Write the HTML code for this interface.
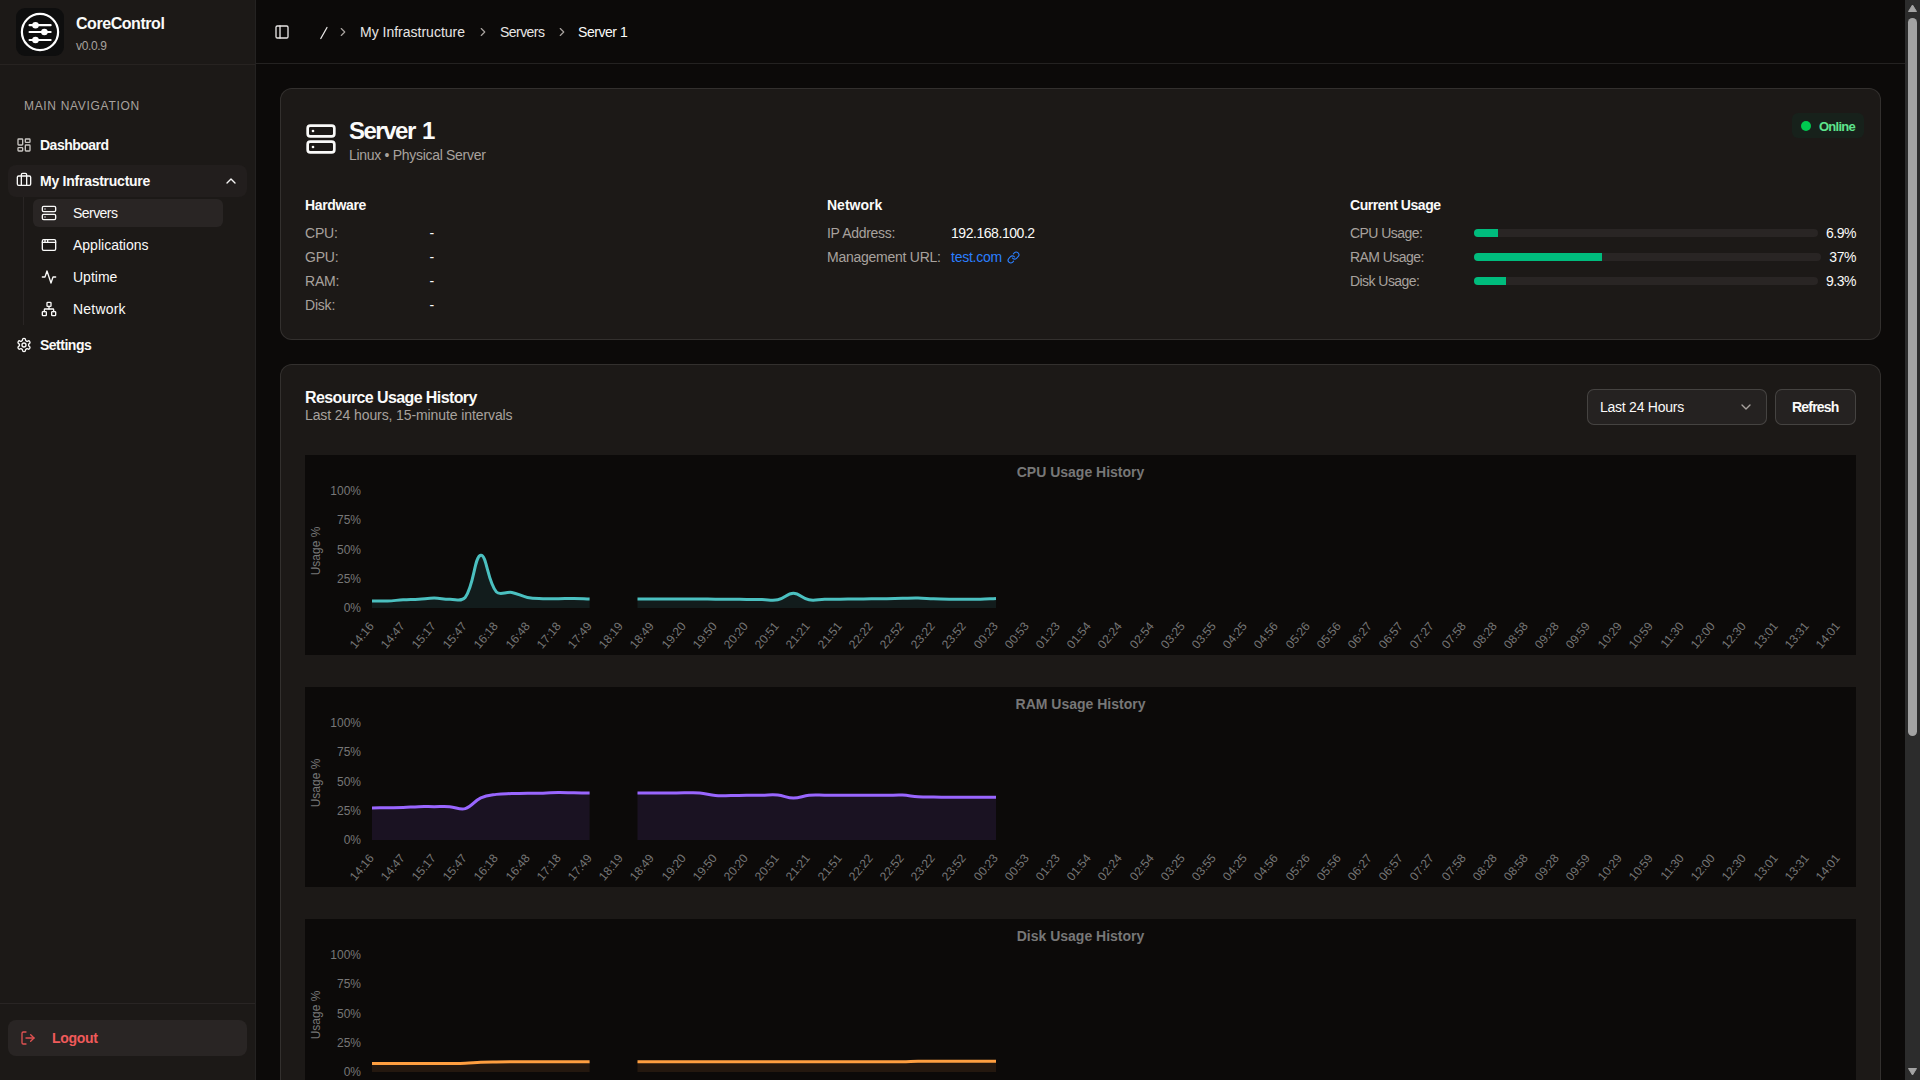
<!DOCTYPE html><html><head><meta charset="utf-8"><title>CoreControl</title><style>
*{margin:0;padding:0;box-sizing:border-box}
html,body{width:1920px;height:1080px;overflow:hidden;background:#0c0a09;font-family:"Liberation Sans",sans-serif}
.t{position:absolute;white-space:pre}
.a{position:absolute}
svg{position:absolute;overflow:visible}
</style></head><body>
<div class="a" style="left:0;top:0;width:256px;height:1080px;background:#1c1917;border-right:1px solid #242221"></div>
<div class="a" style="left:0;top:64px;width:255px;height:1px;background:#272321"></div>
<div class="a" style="left:0;top:1003px;width:255px;height:1px;background:#292524"></div>
<div class="a" style="left:16px;top:8px;width:48px;height:48px;border-radius:9px;background:#0e0e0e"></div>
<svg style="left:16px;top:8px" width="48" height="48" viewBox="0 0 48 48"><circle cx="24" cy="24" r="18.1" fill="none" stroke="#fff" stroke-width="2.2"/><g stroke="#fff" stroke-width="2.2" stroke-linecap="round"><line x1="13.6" y1="17.2" x2="34.6" y2="17.2"/><line x1="13.6" y1="24" x2="34.6" y2="24"/><line x1="13.6" y1="32" x2="34.6" y2="32"/></g><g fill="#fff"><circle cx="19.5" cy="17.2" r="3.3"/><circle cx="28.4" cy="24" r="3.3"/><circle cx="19.5" cy="32" r="3.3"/></g></svg>
<div class="t" style="left:76px;top:16.00px;font-size:16px;line-height:16px;font-weight:700;color:#fafaf9;letter-spacing:-0.45px;">CoreControl</div>
<div class="t" style="left:76px;top:39.80px;font-size:12px;line-height:12px;font-weight:400;color:#a8a29e;letter-spacing:-0.35px;">v0.0.9</div>
<div class="t" style="left:24px;top:99.80px;font-size:12px;line-height:12px;font-weight:400;color:#a8a29e;letter-spacing:0.68px;">MAIN NAVIGATION</div>
<svg style="left:16px;top:137px" width="16" height="16" viewBox="0 0 24 24" fill="none" stroke="#c8c5c2" stroke-width="2" stroke-linecap="round" stroke-linejoin="round"><rect width="7" height="9" x="3" y="3" rx="1"/><rect width="7" height="5" x="14" y="3" rx="1"/><rect width="7" height="9" x="14" y="12" rx="1"/><rect width="7" height="5" x="3" y="16" rx="1"/></svg>
<div class="t" style="left:40px;top:138.10px;font-size:14px;line-height:14px;font-weight:700;color:#fafaf9;letter-spacing:-0.5px;">Dashboard</div>
<div class="a" style="left:8px;top:165px;width:239px;height:32px;border-radius:8px;background:#221e1d"></div>
<svg style="left:16px;top:172px" width="16" height="16" viewBox="0 0 24 24" fill="none" stroke="#fafaf9" stroke-width="2" stroke-linecap="round" stroke-linejoin="round"><path d="M16 20V4a2 2 0 0 0-2-2h-4a2 2 0 0 0-2 2v16"/><rect width="20" height="14" x="2" y="6" rx="2"/></svg>
<div class="t" style="left:40px;top:174.10px;font-size:14px;line-height:14px;font-weight:700;color:#fafaf9;letter-spacing:-0.25px;">My Infrastructure</div>
<svg style="left:223px;top:173px" width="16" height="16" viewBox="0 0 24 24" fill="none" stroke="#f5f5f4" stroke-width="2" stroke-linecap="round" stroke-linejoin="round"><path d="m18 15-6-6-6 6"/></svg>
<div class="a" style="left:23px;top:197px;width:1px;height:128px;background:#292524"></div>
<div class="a" style="left:33px;top:199px;width:190px;height:28px;border-radius:6px;background:#292524"></div>
<svg style="left:41px;top:205px" width="16" height="16" viewBox="0 0 24 24" fill="none" stroke="#fafaf9" stroke-width="2" stroke-linecap="round" stroke-linejoin="round"><rect width="20" height="8" x="2" y="2" rx="2" ry="2"/><rect width="20" height="8" x="2" y="14" rx="2" ry="2"/><line x1="6" x2="6.01" y1="6" y2="6"/><line x1="6" x2="6.01" y1="18" y2="18"/></svg>
<div class="t" style="left:73px;top:205.60px;font-size:14px;line-height:14px;font-weight:400;color:#fafaf9;letter-spacing:-0.55px;">Servers</div>
<svg style="left:41px;top:237px" width="16" height="16" viewBox="0 0 24 24" fill="none" stroke="#fafaf9" stroke-width="2" stroke-linecap="round" stroke-linejoin="round"><rect width="20" height="16" x="2" y="4" rx="2"/><path d="M10 4v4"/><path d="M2 8h20"/><path d="M6 4v4"/></svg>
<div class="t" style="left:73px;top:238.10px;font-size:14px;line-height:14px;font-weight:400;color:#fafaf9;">Applications</div>
<svg style="left:41px;top:269px" width="16" height="16" viewBox="0 0 24 24" fill="none" stroke="#fafaf9" stroke-width="2" stroke-linecap="round" stroke-linejoin="round"><path d="M22 12h-4l-3 9L9 3l-3 9H2"/></svg>
<div class="t" style="left:73px;top:270.10px;font-size:14px;line-height:14px;font-weight:400;color:#fafaf9;">Uptime</div>
<svg style="left:41px;top:301px" width="16" height="16" viewBox="0 0 24 24" fill="none" stroke="#fafaf9" stroke-width="2" stroke-linecap="round" stroke-linejoin="round"><rect x="16" y="16" width="6" height="6" rx="1"/><rect x="2" y="16" width="6" height="6" rx="1"/><rect x="9" y="2" width="6" height="6" rx="1"/><path d="M5 16v-3a1 1 0 0 1 1-1h12a1 1 0 0 1 1 1v3"/><path d="M12 12V8"/></svg>
<div class="t" style="left:73px;top:302.10px;font-size:14px;line-height:14px;font-weight:400;color:#fafaf9;letter-spacing:0.2px;">Network</div>
<svg style="left:16px;top:337px" width="16" height="16" viewBox="0 0 24 24" fill="none" stroke="#fafaf9" stroke-width="2" stroke-linecap="round" stroke-linejoin="round"><path d="M12.22 2h-.44a2 2 0 0 0-2 2v.18a2 2 0 0 1-1 1.73l-.43.25a2 2 0 0 1-2 0l-.15-.08a2 2 0 0 0-2.73.73l-.22.38a2 2 0 0 0 .73 2.73l.15.1a2 2 0 0 1 1 1.72v.51a2 2 0 0 1-1 1.74l-.15.09a2 2 0 0 0-.73 2.73l.22.38a2 2 0 0 0 2.73.73l.15-.08a2 2 0 0 1 2 0l.43.25a2 2 0 0 1 1 1.73V20a2 2 0 0 0 2 2h.44a2 2 0 0 0 2-2v-.18a2 2 0 0 1 1-1.73l.43-.25a2 2 0 0 1 2 0l.15.08a2 2 0 0 0 2.73-.73l.22-.39a2 2 0 0 0-.73-2.73l-.15-.08a2 2 0 0 1-1-1.74v-.5a2 2 0 0 1 1-1.74l.15-.09a2 2 0 0 0 .73-2.73l-.22-.38a2 2 0 0 0-2.73-.73l-.15.08a2 2 0 0 1-2 0l-.43-.25a2 2 0 0 1-1-1.73V4a2 2 0 0 0-2-2z"/><circle cx="12" cy="12" r="3"/></svg>
<div class="t" style="left:40px;top:338.10px;font-size:14px;line-height:14px;font-weight:700;color:#fafaf9;letter-spacing:-0.5px;">Settings</div>
<div class="a" style="left:8px;top:1020px;width:239px;height:36px;border-radius:8px;background:#292524"></div>
<svg style="left:20px;top:1030px" width="16" height="16" viewBox="0 0 24 24" fill="none" stroke="#e05252" stroke-width="2" stroke-linecap="round" stroke-linejoin="round"><path d="M9 21H5a2 2 0 0 1-2-2V5a2 2 0 0 1 2-2h4"/><polyline points="16 17 21 12 16 7"/><line x1="21" x2="9" y1="12" y2="12"/></svg>
<div class="t" style="left:52px;top:1031.10px;font-size:14px;line-height:14px;font-weight:700;color:#f05a5a;letter-spacing:-0.3px;">Logout</div>
<div class="a" style="left:256px;top:63px;width:1649px;height:1px;background:#242221"></div>
<svg style="left:274px;top:24px" width="16" height="16" viewBox="0 0 24 24" fill="none" stroke="#e7e5e4" stroke-width="2" stroke-linecap="round" stroke-linejoin="round"><rect width="18" height="18" x="3" y="3" rx="2"/><path d="M9 3v18"/></svg>
<svg style="left:318px;top:25px" width="12" height="16"><line x1="9" y1="2.5" x2="2.8" y2="13.5" stroke="#e7e5e4" stroke-width="1.3" stroke-linecap="round"/></svg>
<svg style="left:336px;top:25px" width="14" height="14" viewBox="0 0 24 24" fill="none" stroke="#a8a29e" stroke-width="2" stroke-linecap="round" stroke-linejoin="round"><path d="m9 18 6-6-6-6"/></svg>
<div class="t" style="left:360px;top:25.10px;font-size:14px;line-height:14px;font-weight:400;color:#e7e5e4;">My Infrastructure</div>
<svg style="left:476px;top:25px" width="14" height="14" viewBox="0 0 24 24" fill="none" stroke="#a8a29e" stroke-width="2" stroke-linecap="round" stroke-linejoin="round"><path d="m9 18 6-6-6-6"/></svg>
<div class="t" style="left:500px;top:25.10px;font-size:14px;line-height:14px;font-weight:400;color:#e7e5e4;letter-spacing:-0.55px;">Servers</div>
<svg style="left:555px;top:25px" width="14" height="14" viewBox="0 0 24 24" fill="none" stroke="#a8a29e" stroke-width="2" stroke-linecap="round" stroke-linejoin="round"><path d="m9 18 6-6-6-6"/></svg>
<div class="t" style="left:578px;top:25.10px;font-size:14px;line-height:14px;font-weight:400;color:#fafaf9;letter-spacing:-0.45px;">Server 1</div>
<div class="a" style="left:280px;top:88px;width:1601px;height:252px;border-radius:12px;background:#1c1917;border:1px solid rgba(255,255,255,0.1)"></div>
<svg style="left:305px;top:123px" width="32" height="32" viewBox="0 0 24 24" fill="none" stroke="#fafaf9" stroke-width="2" stroke-linecap="round" stroke-linejoin="round"><rect width="20" height="8" x="2" y="2" rx="2" ry="2"/><rect width="20" height="8" x="2" y="14" rx="2" ry="2"/><line x1="6" x2="6.01" y1="6" y2="6"/><line x1="6" x2="6.01" y1="18" y2="18"/></svg>
<div class="t" style="left:349px;top:119.10px;font-size:24px;line-height:24px;font-weight:700;color:#fafaf9;letter-spacing:-1.5px;word-spacing:2px;">Server 1</div>
<div class="t" style="left:349px;top:148.10px;font-size:14px;line-height:14px;font-weight:400;color:#a8a29e;letter-spacing:-0.3px;">Linux • Physical Server</div>
<div class="a" style="left:1792px;top:113px;width:72px;height:25px;border-radius:6px;background:#17211b"></div>
<div class="a" style="left:1801px;top:120.8px;width:10px;height:10px;border-radius:50%;background:#00c950"></div>
<div class="t" style="left:1819px;top:120.45px;font-size:13px;line-height:13px;font-weight:700;color:#5ee48c;letter-spacing:-0.75px;">Online</div>
<div class="t" style="left:305px;top:197.80px;font-size:14px;line-height:14px;font-weight:700;color:#fafaf9;letter-spacing:-0.35px;">Hardware</div>
<div class="t" style="left:305px;top:226.40px;font-size:14px;line-height:14px;font-weight:400;color:#a8a29e;letter-spacing:-0.2px;">CPU:</div>
<div class="t" style="left:429.5px;top:226.40px;font-size:14px;line-height:14px;font-weight:400;color:#fafaf9;">-</div>
<div class="t" style="left:305px;top:250.40px;font-size:14px;line-height:14px;font-weight:400;color:#a8a29e;letter-spacing:-0.2px;">GPU:</div>
<div class="t" style="left:429.5px;top:250.40px;font-size:14px;line-height:14px;font-weight:400;color:#fafaf9;">-</div>
<div class="t" style="left:305px;top:274.40px;font-size:14px;line-height:14px;font-weight:400;color:#a8a29e;letter-spacing:-0.2px;">RAM:</div>
<div class="t" style="left:429.5px;top:274.40px;font-size:14px;line-height:14px;font-weight:400;color:#fafaf9;">-</div>
<div class="t" style="left:305px;top:298.40px;font-size:14px;line-height:14px;font-weight:400;color:#a8a29e;letter-spacing:-0.2px;">Disk:</div>
<div class="t" style="left:429.5px;top:298.40px;font-size:14px;line-height:14px;font-weight:400;color:#fafaf9;">-</div>
<div class="t" style="left:827px;top:197.90px;font-size:14px;line-height:14px;font-weight:700;color:#fafaf9;">Network</div>
<div class="t" style="left:827px;top:226.00px;font-size:14px;line-height:14px;font-weight:400;color:#a8a29e;letter-spacing:-0.3px;">IP Address:</div>
<div class="t" style="left:951px;top:226.00px;font-size:14px;line-height:14px;font-weight:400;color:#fafaf9;letter-spacing:-0.45px;">192.168.100.2</div>
<div class="t" style="left:827px;top:250.00px;font-size:14px;line-height:14px;font-weight:400;color:#a8a29e;letter-spacing:-0.25px;">Management URL:</div>
<div class="t" style="left:951px;top:249.70px;font-size:14px;line-height:14px;font-weight:400;color:#2b7fff;letter-spacing:-0.25px;">test.com</div>
<svg style="left:1007px;top:251px" width="13" height="13" viewBox="0 0 24 24" fill="none" stroke="#2b7fff" stroke-width="2" stroke-linecap="round" stroke-linejoin="round"><path d="M10 13a5 5 0 0 0 7.54.54l3-3a5 5 0 0 0-7.07-7.07l-1.72 1.71"/><path d="M14 11a5 5 0 0 0-7.54-.54l-3 3a5 5 0 0 0 7.07 7.07l1.71-1.71"/></svg>
<div class="t" style="left:1350px;top:198.30px;font-size:14px;line-height:14px;font-weight:700;color:#fafaf9;letter-spacing:-0.45px;">Current Usage</div>
<div class="t" style="left:1350px;top:226.00px;font-size:14px;line-height:14px;font-weight:400;color:#a8a29e;letter-spacing:-0.55px;">CPU Usage:</div>
<div class="a" style="left:1474px;top:229px;width:343.5px;height:8px;border-radius:4px;background:#292524;overflow:hidden"><div style="width:6.9%;height:8px;background:#00bc7d"></div></div>
<div class="t" style="right:64px;top:226.00px;font-size:14px;line-height:14px;color:#fafaf9;letter-spacing:-0.45px">6.9%</div>
<div class="t" style="left:1350px;top:250.00px;font-size:14px;line-height:14px;font-weight:400;color:#a8a29e;letter-spacing:-0.55px;">RAM Usage:</div>
<div class="a" style="left:1474px;top:253px;width:346.70000000000005px;height:8px;border-radius:4px;background:#292524;overflow:hidden"><div style="width:37%;height:8px;background:#00bc7d"></div></div>
<div class="t" style="right:64px;top:250.00px;font-size:14px;line-height:14px;color:#fafaf9;letter-spacing:-0.45px">37%</div>
<div class="t" style="left:1350px;top:274.00px;font-size:14px;line-height:14px;font-weight:400;color:#a8a29e;letter-spacing:-0.55px;">Disk Usage:</div>
<div class="a" style="left:1474px;top:277px;width:343.5px;height:8px;border-radius:4px;background:#292524;overflow:hidden"><div style="width:9.3%;height:8px;background:#00bc7d"></div></div>
<div class="t" style="right:64px;top:274.00px;font-size:14px;line-height:14px;color:#fafaf9;letter-spacing:-0.45px">9.3%</div>
<div class="a" style="left:280px;top:364px;width:1601px;height:900px;border-radius:12px;background:#1c1917;border:1px solid rgba(255,255,255,0.1)"></div>
<div class="t" style="left:305px;top:390.00px;font-size:16px;line-height:16px;font-weight:700;color:#fafaf9;letter-spacing:-0.6px;">Resource Usage History</div>
<div class="t" style="left:305px;top:407.90px;font-size:14px;line-height:14px;font-weight:400;color:#a8a29e;letter-spacing:-0.1px;">Last 24 hours, 15-minute intervals</div>
<div class="a" style="left:1587px;top:389px;width:180px;height:36px;border-radius:7px;background:rgba(255,255,255,0.045);border:1px solid rgba(255,255,255,0.15)"></div>
<div class="t" style="left:1600px;top:400.30px;font-size:14px;line-height:14px;font-weight:400;color:#fafaf9;letter-spacing:-0.25px;">Last 24 Hours</div>
<svg style="left:1738px;top:399px" width="16" height="16" viewBox="0 0 24 24" fill="none" stroke="#a8a29e" stroke-width="2" stroke-linecap="round" stroke-linejoin="round"><path d="m6 9 6 6 6-6"/></svg>
<div class="a" style="left:1775px;top:389px;width:81px;height:36px;border-radius:7px;background:rgba(255,255,255,0.045);border:1px solid rgba(255,255,255,0.15)"></div>
<div class="t" style="left:1792px;top:400.30px;font-size:14px;line-height:14px;font-weight:700;color:#fafaf9;letter-spacing:-0.8px;">Refresh</div>
<div class="a" style="left:305px;top:455px;width:1551px;height:200px;background:#0c0a09"></div>
<div class="t" style="left:305px;width:1551px;text-align:center;top:465.10px;font-size:14px;line-height:14px;font-weight:700;color:#777">CPU Usage History</div>
<div class="t" style="right:1559px;top:485.10px;font-size:12px;line-height:12px;color:#777">100%</div>
<div class="t" style="right:1559px;top:514.35px;font-size:12px;line-height:12px;color:#777">75%</div>
<div class="t" style="right:1559px;top:543.60px;font-size:12px;line-height:12px;color:#777">50%</div>
<div class="t" style="right:1559px;top:572.85px;font-size:12px;line-height:12px;color:#777">25%</div>
<div class="t" style="right:1559px;top:602.10px;font-size:12px;line-height:12px;color:#777">0%</div>
<div class="t" style="left:316px;top:551px;font-size:12px;line-height:12px;color:#777;transform:translate(-50%,-50%) rotate(-90deg);transform-origin:center">Usage %</div>
<div class="t" style="left:266.60px;width:100px;text-align:right;top:620px;font-size:12px;line-height:12px;color:#777;transform-origin:100% 0;transform:rotate(-50deg)">14:16</div>
<div class="t" style="left:297.80px;width:100px;text-align:right;top:620px;font-size:12px;line-height:12px;color:#777;transform-origin:100% 0;transform:rotate(-50deg)">14:47</div>
<div class="t" style="left:329.00px;width:100px;text-align:right;top:620px;font-size:12px;line-height:12px;color:#777;transform-origin:100% 0;transform:rotate(-50deg)">15:17</div>
<div class="t" style="left:360.20px;width:100px;text-align:right;top:620px;font-size:12px;line-height:12px;color:#777;transform-origin:100% 0;transform:rotate(-50deg)">15:47</div>
<div class="t" style="left:391.40px;width:100px;text-align:right;top:620px;font-size:12px;line-height:12px;color:#777;transform-origin:100% 0;transform:rotate(-50deg)">16:18</div>
<div class="t" style="left:422.60px;width:100px;text-align:right;top:620px;font-size:12px;line-height:12px;color:#777;transform-origin:100% 0;transform:rotate(-50deg)">16:48</div>
<div class="t" style="left:453.80px;width:100px;text-align:right;top:620px;font-size:12px;line-height:12px;color:#777;transform-origin:100% 0;transform:rotate(-50deg)">17:18</div>
<div class="t" style="left:485.00px;width:100px;text-align:right;top:620px;font-size:12px;line-height:12px;color:#777;transform-origin:100% 0;transform:rotate(-50deg)">17:49</div>
<div class="t" style="left:516.20px;width:100px;text-align:right;top:620px;font-size:12px;line-height:12px;color:#777;transform-origin:100% 0;transform:rotate(-50deg)">18:19</div>
<div class="t" style="left:547.40px;width:100px;text-align:right;top:620px;font-size:12px;line-height:12px;color:#777;transform-origin:100% 0;transform:rotate(-50deg)">18:49</div>
<div class="t" style="left:578.60px;width:100px;text-align:right;top:620px;font-size:12px;line-height:12px;color:#777;transform-origin:100% 0;transform:rotate(-50deg)">19:20</div>
<div class="t" style="left:609.80px;width:100px;text-align:right;top:620px;font-size:12px;line-height:12px;color:#777;transform-origin:100% 0;transform:rotate(-50deg)">19:50</div>
<div class="t" style="left:641.00px;width:100px;text-align:right;top:620px;font-size:12px;line-height:12px;color:#777;transform-origin:100% 0;transform:rotate(-50deg)">20:20</div>
<div class="t" style="left:672.20px;width:100px;text-align:right;top:620px;font-size:12px;line-height:12px;color:#777;transform-origin:100% 0;transform:rotate(-50deg)">20:51</div>
<div class="t" style="left:703.40px;width:100px;text-align:right;top:620px;font-size:12px;line-height:12px;color:#777;transform-origin:100% 0;transform:rotate(-50deg)">21:21</div>
<div class="t" style="left:734.60px;width:100px;text-align:right;top:620px;font-size:12px;line-height:12px;color:#777;transform-origin:100% 0;transform:rotate(-50deg)">21:51</div>
<div class="t" style="left:765.80px;width:100px;text-align:right;top:620px;font-size:12px;line-height:12px;color:#777;transform-origin:100% 0;transform:rotate(-50deg)">22:22</div>
<div class="t" style="left:797.00px;width:100px;text-align:right;top:620px;font-size:12px;line-height:12px;color:#777;transform-origin:100% 0;transform:rotate(-50deg)">22:52</div>
<div class="t" style="left:828.20px;width:100px;text-align:right;top:620px;font-size:12px;line-height:12px;color:#777;transform-origin:100% 0;transform:rotate(-50deg)">23:22</div>
<div class="t" style="left:859.40px;width:100px;text-align:right;top:620px;font-size:12px;line-height:12px;color:#777;transform-origin:100% 0;transform:rotate(-50deg)">23:52</div>
<div class="t" style="left:890.60px;width:100px;text-align:right;top:620px;font-size:12px;line-height:12px;color:#777;transform-origin:100% 0;transform:rotate(-50deg)">00:23</div>
<div class="t" style="left:921.80px;width:100px;text-align:right;top:620px;font-size:12px;line-height:12px;color:#777;transform-origin:100% 0;transform:rotate(-50deg)">00:53</div>
<div class="t" style="left:953.00px;width:100px;text-align:right;top:620px;font-size:12px;line-height:12px;color:#777;transform-origin:100% 0;transform:rotate(-50deg)">01:23</div>
<div class="t" style="left:984.20px;width:100px;text-align:right;top:620px;font-size:12px;line-height:12px;color:#777;transform-origin:100% 0;transform:rotate(-50deg)">01:54</div>
<div class="t" style="left:1015.40px;width:100px;text-align:right;top:620px;font-size:12px;line-height:12px;color:#777;transform-origin:100% 0;transform:rotate(-50deg)">02:24</div>
<div class="t" style="left:1046.60px;width:100px;text-align:right;top:620px;font-size:12px;line-height:12px;color:#777;transform-origin:100% 0;transform:rotate(-50deg)">02:54</div>
<div class="t" style="left:1077.80px;width:100px;text-align:right;top:620px;font-size:12px;line-height:12px;color:#777;transform-origin:100% 0;transform:rotate(-50deg)">03:25</div>
<div class="t" style="left:1109.00px;width:100px;text-align:right;top:620px;font-size:12px;line-height:12px;color:#777;transform-origin:100% 0;transform:rotate(-50deg)">03:55</div>
<div class="t" style="left:1140.20px;width:100px;text-align:right;top:620px;font-size:12px;line-height:12px;color:#777;transform-origin:100% 0;transform:rotate(-50deg)">04:25</div>
<div class="t" style="left:1171.40px;width:100px;text-align:right;top:620px;font-size:12px;line-height:12px;color:#777;transform-origin:100% 0;transform:rotate(-50deg)">04:56</div>
<div class="t" style="left:1202.60px;width:100px;text-align:right;top:620px;font-size:12px;line-height:12px;color:#777;transform-origin:100% 0;transform:rotate(-50deg)">05:26</div>
<div class="t" style="left:1233.80px;width:100px;text-align:right;top:620px;font-size:12px;line-height:12px;color:#777;transform-origin:100% 0;transform:rotate(-50deg)">05:56</div>
<div class="t" style="left:1265.00px;width:100px;text-align:right;top:620px;font-size:12px;line-height:12px;color:#777;transform-origin:100% 0;transform:rotate(-50deg)">06:27</div>
<div class="t" style="left:1296.20px;width:100px;text-align:right;top:620px;font-size:12px;line-height:12px;color:#777;transform-origin:100% 0;transform:rotate(-50deg)">06:57</div>
<div class="t" style="left:1327.40px;width:100px;text-align:right;top:620px;font-size:12px;line-height:12px;color:#777;transform-origin:100% 0;transform:rotate(-50deg)">07:27</div>
<div class="t" style="left:1358.60px;width:100px;text-align:right;top:620px;font-size:12px;line-height:12px;color:#777;transform-origin:100% 0;transform:rotate(-50deg)">07:58</div>
<div class="t" style="left:1389.80px;width:100px;text-align:right;top:620px;font-size:12px;line-height:12px;color:#777;transform-origin:100% 0;transform:rotate(-50deg)">08:28</div>
<div class="t" style="left:1421.00px;width:100px;text-align:right;top:620px;font-size:12px;line-height:12px;color:#777;transform-origin:100% 0;transform:rotate(-50deg)">08:58</div>
<div class="t" style="left:1452.20px;width:100px;text-align:right;top:620px;font-size:12px;line-height:12px;color:#777;transform-origin:100% 0;transform:rotate(-50deg)">09:28</div>
<div class="t" style="left:1483.40px;width:100px;text-align:right;top:620px;font-size:12px;line-height:12px;color:#777;transform-origin:100% 0;transform:rotate(-50deg)">09:59</div>
<div class="t" style="left:1514.60px;width:100px;text-align:right;top:620px;font-size:12px;line-height:12px;color:#777;transform-origin:100% 0;transform:rotate(-50deg)">10:29</div>
<div class="t" style="left:1545.80px;width:100px;text-align:right;top:620px;font-size:12px;line-height:12px;color:#777;transform-origin:100% 0;transform:rotate(-50deg)">10:59</div>
<div class="t" style="left:1577.00px;width:100px;text-align:right;top:620px;font-size:12px;line-height:12px;color:#777;transform-origin:100% 0;transform:rotate(-50deg)">11:30</div>
<div class="t" style="left:1608.20px;width:100px;text-align:right;top:620px;font-size:12px;line-height:12px;color:#777;transform-origin:100% 0;transform:rotate(-50deg)">12:00</div>
<div class="t" style="left:1639.40px;width:100px;text-align:right;top:620px;font-size:12px;line-height:12px;color:#777;transform-origin:100% 0;transform:rotate(-50deg)">12:30</div>
<div class="t" style="left:1670.60px;width:100px;text-align:right;top:620px;font-size:12px;line-height:12px;color:#777;transform-origin:100% 0;transform:rotate(-50deg)">13:01</div>
<div class="t" style="left:1701.80px;width:100px;text-align:right;top:620px;font-size:12px;line-height:12px;color:#777;transform-origin:100% 0;transform:rotate(-50deg)">13:31</div>
<div class="t" style="left:1733.00px;width:100px;text-align:right;top:620px;font-size:12px;line-height:12px;color:#777;transform-origin:100% 0;transform:rotate(-50deg)">14:01</div>
<svg style="left:0;top:0" width="1920" height="1080"><path d="M372.00,600.98 C378.22,600.98 381.33,601.21 387.54,600.98 C393.77,600.75 396.86,600.16 403.09,599.81 C409.30,599.46 412.42,599.58 418.63,599.23 C424.85,598.87 427.95,598.05 434.17,598.05 C440.39,598.05 443.51,599.34 449.71,599.23 C455.94,599.11 462.04,602.00 465.26,597.47 C474.48,584.45 474.20,556.54 480.80,555.35 C486.63,554.30 487.41,581.20 496.34,591.85 C499.84,596.03 505.82,591.34 511.89,592.44 C518.26,593.59 521.07,596.20 527.43,597.47 C533.50,598.68 536.75,598.41 542.97,598.64 C549.18,598.87 552.30,598.69 558.51,598.64 C564.73,598.59 567.84,598.34 574.06,598.41 C580.28,598.48 583.38,598.76 589.60,598.99 L589.6,608.0 L372.0,608.0 Z" fill="rgba(75,192,192,0.1)"/><path d="M372.00,600.98 C378.22,600.98 381.33,601.21 387.54,600.98 C393.77,600.75 396.86,600.16 403.09,599.81 C409.30,599.46 412.42,599.58 418.63,599.23 C424.85,598.87 427.95,598.05 434.17,598.05 C440.39,598.05 443.51,599.34 449.71,599.23 C455.94,599.11 462.04,602.00 465.26,597.47 C474.48,584.45 474.20,556.54 480.80,555.35 C486.63,554.30 487.41,581.20 496.34,591.85 C499.84,596.03 505.82,591.34 511.89,592.44 C518.26,593.59 521.07,596.20 527.43,597.47 C533.50,598.68 536.75,598.41 542.97,598.64 C549.18,598.87 552.30,598.69 558.51,598.64 C564.73,598.59 567.84,598.34 574.06,598.41 C580.28,598.48 583.38,598.76 589.60,598.99" fill="none" stroke="#4bc0c0" stroke-width="3"/><path d="M637.50,598.99 C643.73,598.99 646.85,598.99 653.09,598.99 C659.32,598.99 662.44,598.99 668.67,598.99 C674.91,598.99 678.03,598.99 684.26,598.99 C690.50,598.99 693.61,598.94 699.85,598.99 C706.08,599.04 709.20,599.18 715.43,599.23 C721.67,599.27 724.79,599.18 731.02,599.23 C737.26,599.27 740.37,599.39 746.61,599.46 C752.84,599.53 755.96,599.51 762.20,599.58 C768.43,599.65 771.80,601.02 777.78,599.81 C784.27,598.50 787.13,593.26 793.37,593.26 C799.60,593.26 802.47,598.57 808.96,599.81 C814.94,600.96 818.31,599.34 824.54,599.23 C830.78,599.11 833.90,599.27 840.13,599.23 C846.37,599.18 849.48,599.06 855.72,598.99 C861.95,598.92 865.07,598.94 871.30,598.87 C877.54,598.80 880.66,598.76 886.89,598.64 C893.13,598.52 896.24,598.41 902.48,598.29 C908.71,598.17 911.83,597.94 918.07,598.05 C924.30,598.17 927.41,598.64 933.65,598.87 C939.88,599.11 943.00,599.15 949.24,599.23 C955.47,599.30 958.59,599.23 964.83,599.23 C971.06,599.23 974.18,599.39 980.41,599.23 C986.65,599.06 989.77,598.73 996.00,598.41 L996.0,608.0 L637.5,608.0 Z" fill="rgba(75,192,192,0.1)"/><path d="M637.50,598.99 C643.73,598.99 646.85,598.99 653.09,598.99 C659.32,598.99 662.44,598.99 668.67,598.99 C674.91,598.99 678.03,598.99 684.26,598.99 C690.50,598.99 693.61,598.94 699.85,598.99 C706.08,599.04 709.20,599.18 715.43,599.23 C721.67,599.27 724.79,599.18 731.02,599.23 C737.26,599.27 740.37,599.39 746.61,599.46 C752.84,599.53 755.96,599.51 762.20,599.58 C768.43,599.65 771.80,601.02 777.78,599.81 C784.27,598.50 787.13,593.26 793.37,593.26 C799.60,593.26 802.47,598.57 808.96,599.81 C814.94,600.96 818.31,599.34 824.54,599.23 C830.78,599.11 833.90,599.27 840.13,599.23 C846.37,599.18 849.48,599.06 855.72,598.99 C861.95,598.92 865.07,598.94 871.30,598.87 C877.54,598.80 880.66,598.76 886.89,598.64 C893.13,598.52 896.24,598.41 902.48,598.29 C908.71,598.17 911.83,597.94 918.07,598.05 C924.30,598.17 927.41,598.64 933.65,598.87 C939.88,599.11 943.00,599.15 949.24,599.23 C955.47,599.30 958.59,599.23 964.83,599.23 C971.06,599.23 974.18,599.39 980.41,599.23 C986.65,599.06 989.77,598.73 996.00,598.41" fill="none" stroke="#4bc0c0" stroke-width="3"/></svg>
<div class="a" style="left:305px;top:687px;width:1551px;height:200px;background:#0c0a09"></div>
<div class="t" style="left:305px;width:1551px;text-align:center;top:697.10px;font-size:14px;line-height:14px;font-weight:700;color:#777">RAM Usage History</div>
<div class="t" style="right:1559px;top:717.10px;font-size:12px;line-height:12px;color:#777">100%</div>
<div class="t" style="right:1559px;top:746.35px;font-size:12px;line-height:12px;color:#777">75%</div>
<div class="t" style="right:1559px;top:775.60px;font-size:12px;line-height:12px;color:#777">50%</div>
<div class="t" style="right:1559px;top:804.85px;font-size:12px;line-height:12px;color:#777">25%</div>
<div class="t" style="right:1559px;top:834.10px;font-size:12px;line-height:12px;color:#777">0%</div>
<div class="t" style="left:316px;top:783px;font-size:12px;line-height:12px;color:#777;transform:translate(-50%,-50%) rotate(-90deg);transform-origin:center">Usage %</div>
<div class="t" style="left:266.60px;width:100px;text-align:right;top:852px;font-size:12px;line-height:12px;color:#777;transform-origin:100% 0;transform:rotate(-50deg)">14:16</div>
<div class="t" style="left:297.80px;width:100px;text-align:right;top:852px;font-size:12px;line-height:12px;color:#777;transform-origin:100% 0;transform:rotate(-50deg)">14:47</div>
<div class="t" style="left:329.00px;width:100px;text-align:right;top:852px;font-size:12px;line-height:12px;color:#777;transform-origin:100% 0;transform:rotate(-50deg)">15:17</div>
<div class="t" style="left:360.20px;width:100px;text-align:right;top:852px;font-size:12px;line-height:12px;color:#777;transform-origin:100% 0;transform:rotate(-50deg)">15:47</div>
<div class="t" style="left:391.40px;width:100px;text-align:right;top:852px;font-size:12px;line-height:12px;color:#777;transform-origin:100% 0;transform:rotate(-50deg)">16:18</div>
<div class="t" style="left:422.60px;width:100px;text-align:right;top:852px;font-size:12px;line-height:12px;color:#777;transform-origin:100% 0;transform:rotate(-50deg)">16:48</div>
<div class="t" style="left:453.80px;width:100px;text-align:right;top:852px;font-size:12px;line-height:12px;color:#777;transform-origin:100% 0;transform:rotate(-50deg)">17:18</div>
<div class="t" style="left:485.00px;width:100px;text-align:right;top:852px;font-size:12px;line-height:12px;color:#777;transform-origin:100% 0;transform:rotate(-50deg)">17:49</div>
<div class="t" style="left:516.20px;width:100px;text-align:right;top:852px;font-size:12px;line-height:12px;color:#777;transform-origin:100% 0;transform:rotate(-50deg)">18:19</div>
<div class="t" style="left:547.40px;width:100px;text-align:right;top:852px;font-size:12px;line-height:12px;color:#777;transform-origin:100% 0;transform:rotate(-50deg)">18:49</div>
<div class="t" style="left:578.60px;width:100px;text-align:right;top:852px;font-size:12px;line-height:12px;color:#777;transform-origin:100% 0;transform:rotate(-50deg)">19:20</div>
<div class="t" style="left:609.80px;width:100px;text-align:right;top:852px;font-size:12px;line-height:12px;color:#777;transform-origin:100% 0;transform:rotate(-50deg)">19:50</div>
<div class="t" style="left:641.00px;width:100px;text-align:right;top:852px;font-size:12px;line-height:12px;color:#777;transform-origin:100% 0;transform:rotate(-50deg)">20:20</div>
<div class="t" style="left:672.20px;width:100px;text-align:right;top:852px;font-size:12px;line-height:12px;color:#777;transform-origin:100% 0;transform:rotate(-50deg)">20:51</div>
<div class="t" style="left:703.40px;width:100px;text-align:right;top:852px;font-size:12px;line-height:12px;color:#777;transform-origin:100% 0;transform:rotate(-50deg)">21:21</div>
<div class="t" style="left:734.60px;width:100px;text-align:right;top:852px;font-size:12px;line-height:12px;color:#777;transform-origin:100% 0;transform:rotate(-50deg)">21:51</div>
<div class="t" style="left:765.80px;width:100px;text-align:right;top:852px;font-size:12px;line-height:12px;color:#777;transform-origin:100% 0;transform:rotate(-50deg)">22:22</div>
<div class="t" style="left:797.00px;width:100px;text-align:right;top:852px;font-size:12px;line-height:12px;color:#777;transform-origin:100% 0;transform:rotate(-50deg)">22:52</div>
<div class="t" style="left:828.20px;width:100px;text-align:right;top:852px;font-size:12px;line-height:12px;color:#777;transform-origin:100% 0;transform:rotate(-50deg)">23:22</div>
<div class="t" style="left:859.40px;width:100px;text-align:right;top:852px;font-size:12px;line-height:12px;color:#777;transform-origin:100% 0;transform:rotate(-50deg)">23:52</div>
<div class="t" style="left:890.60px;width:100px;text-align:right;top:852px;font-size:12px;line-height:12px;color:#777;transform-origin:100% 0;transform:rotate(-50deg)">00:23</div>
<div class="t" style="left:921.80px;width:100px;text-align:right;top:852px;font-size:12px;line-height:12px;color:#777;transform-origin:100% 0;transform:rotate(-50deg)">00:53</div>
<div class="t" style="left:953.00px;width:100px;text-align:right;top:852px;font-size:12px;line-height:12px;color:#777;transform-origin:100% 0;transform:rotate(-50deg)">01:23</div>
<div class="t" style="left:984.20px;width:100px;text-align:right;top:852px;font-size:12px;line-height:12px;color:#777;transform-origin:100% 0;transform:rotate(-50deg)">01:54</div>
<div class="t" style="left:1015.40px;width:100px;text-align:right;top:852px;font-size:12px;line-height:12px;color:#777;transform-origin:100% 0;transform:rotate(-50deg)">02:24</div>
<div class="t" style="left:1046.60px;width:100px;text-align:right;top:852px;font-size:12px;line-height:12px;color:#777;transform-origin:100% 0;transform:rotate(-50deg)">02:54</div>
<div class="t" style="left:1077.80px;width:100px;text-align:right;top:852px;font-size:12px;line-height:12px;color:#777;transform-origin:100% 0;transform:rotate(-50deg)">03:25</div>
<div class="t" style="left:1109.00px;width:100px;text-align:right;top:852px;font-size:12px;line-height:12px;color:#777;transform-origin:100% 0;transform:rotate(-50deg)">03:55</div>
<div class="t" style="left:1140.20px;width:100px;text-align:right;top:852px;font-size:12px;line-height:12px;color:#777;transform-origin:100% 0;transform:rotate(-50deg)">04:25</div>
<div class="t" style="left:1171.40px;width:100px;text-align:right;top:852px;font-size:12px;line-height:12px;color:#777;transform-origin:100% 0;transform:rotate(-50deg)">04:56</div>
<div class="t" style="left:1202.60px;width:100px;text-align:right;top:852px;font-size:12px;line-height:12px;color:#777;transform-origin:100% 0;transform:rotate(-50deg)">05:26</div>
<div class="t" style="left:1233.80px;width:100px;text-align:right;top:852px;font-size:12px;line-height:12px;color:#777;transform-origin:100% 0;transform:rotate(-50deg)">05:56</div>
<div class="t" style="left:1265.00px;width:100px;text-align:right;top:852px;font-size:12px;line-height:12px;color:#777;transform-origin:100% 0;transform:rotate(-50deg)">06:27</div>
<div class="t" style="left:1296.20px;width:100px;text-align:right;top:852px;font-size:12px;line-height:12px;color:#777;transform-origin:100% 0;transform:rotate(-50deg)">06:57</div>
<div class="t" style="left:1327.40px;width:100px;text-align:right;top:852px;font-size:12px;line-height:12px;color:#777;transform-origin:100% 0;transform:rotate(-50deg)">07:27</div>
<div class="t" style="left:1358.60px;width:100px;text-align:right;top:852px;font-size:12px;line-height:12px;color:#777;transform-origin:100% 0;transform:rotate(-50deg)">07:58</div>
<div class="t" style="left:1389.80px;width:100px;text-align:right;top:852px;font-size:12px;line-height:12px;color:#777;transform-origin:100% 0;transform:rotate(-50deg)">08:28</div>
<div class="t" style="left:1421.00px;width:100px;text-align:right;top:852px;font-size:12px;line-height:12px;color:#777;transform-origin:100% 0;transform:rotate(-50deg)">08:58</div>
<div class="t" style="left:1452.20px;width:100px;text-align:right;top:852px;font-size:12px;line-height:12px;color:#777;transform-origin:100% 0;transform:rotate(-50deg)">09:28</div>
<div class="t" style="left:1483.40px;width:100px;text-align:right;top:852px;font-size:12px;line-height:12px;color:#777;transform-origin:100% 0;transform:rotate(-50deg)">09:59</div>
<div class="t" style="left:1514.60px;width:100px;text-align:right;top:852px;font-size:12px;line-height:12px;color:#777;transform-origin:100% 0;transform:rotate(-50deg)">10:29</div>
<div class="t" style="left:1545.80px;width:100px;text-align:right;top:852px;font-size:12px;line-height:12px;color:#777;transform-origin:100% 0;transform:rotate(-50deg)">10:59</div>
<div class="t" style="left:1577.00px;width:100px;text-align:right;top:852px;font-size:12px;line-height:12px;color:#777;transform-origin:100% 0;transform:rotate(-50deg)">11:30</div>
<div class="t" style="left:1608.20px;width:100px;text-align:right;top:852px;font-size:12px;line-height:12px;color:#777;transform-origin:100% 0;transform:rotate(-50deg)">12:00</div>
<div class="t" style="left:1639.40px;width:100px;text-align:right;top:852px;font-size:12px;line-height:12px;color:#777;transform-origin:100% 0;transform:rotate(-50deg)">12:30</div>
<div class="t" style="left:1670.60px;width:100px;text-align:right;top:852px;font-size:12px;line-height:12px;color:#777;transform-origin:100% 0;transform:rotate(-50deg)">13:01</div>
<div class="t" style="left:1701.80px;width:100px;text-align:right;top:852px;font-size:12px;line-height:12px;color:#777;transform-origin:100% 0;transform:rotate(-50deg)">13:31</div>
<div class="t" style="left:1733.00px;width:100px;text-align:right;top:852px;font-size:12px;line-height:12px;color:#777;transform-origin:100% 0;transform:rotate(-50deg)">14:01</div>
<svg style="left:0;top:0" width="1920" height="1080"><path d="M372.00,807.94 C378.22,807.85 381.33,807.80 387.54,807.71 C393.76,807.61 396.87,807.68 403.09,807.47 C409.31,807.26 412.41,806.82 418.63,806.65 C424.84,806.49 427.95,806.65 434.17,806.65 C440.39,806.65 443.52,806.26 449.71,806.65 C455.96,807.05 459.62,810.23 465.26,808.64 C472.06,806.72 474.05,800.98 480.80,797.88 C486.49,795.27 490.05,795.25 496.34,794.37 C502.49,793.51 505.67,793.79 511.89,793.55 C518.10,793.32 521.21,793.27 527.43,793.20 C533.64,793.13 536.76,793.34 542.97,793.20 C549.19,793.06 552.29,792.57 558.51,792.50 C564.73,792.43 567.84,792.73 574.06,792.85 C580.27,792.97 583.38,792.99 589.60,793.08 L589.6,840.0 L372.0,840.0 Z" fill="rgba(153,102,255,0.1)"/><path d="M372.00,807.94 C378.22,807.85 381.33,807.80 387.54,807.71 C393.76,807.61 396.87,807.68 403.09,807.47 C409.31,807.26 412.41,806.82 418.63,806.65 C424.84,806.49 427.95,806.65 434.17,806.65 C440.39,806.65 443.52,806.26 449.71,806.65 C455.96,807.05 459.62,810.23 465.26,808.64 C472.06,806.72 474.05,800.98 480.80,797.88 C486.49,795.27 490.05,795.25 496.34,794.37 C502.49,793.51 505.67,793.79 511.89,793.55 C518.10,793.32 521.21,793.27 527.43,793.20 C533.64,793.13 536.76,793.34 542.97,793.20 C549.19,793.06 552.29,792.57 558.51,792.50 C564.73,792.43 567.84,792.73 574.06,792.85 C580.27,792.97 583.38,792.99 589.60,793.08" fill="none" stroke="#9966ff" stroke-width="3"/><path d="M637.50,793.08 C643.73,793.04 646.85,792.99 653.09,792.97 C659.32,792.94 662.44,792.99 668.67,792.97 C674.91,792.94 678.03,792.85 684.26,792.85 C690.50,792.85 693.65,792.43 699.85,792.97 C706.12,793.51 709.16,795.02 715.43,795.54 C721.63,796.05 724.79,795.59 731.02,795.54 C737.26,795.49 740.37,795.38 746.61,795.31 C752.84,795.24 755.96,795.24 762.20,795.19 C768.43,795.14 771.61,794.49 777.78,795.07 C784.08,795.66 787.13,798.07 793.37,798.11 C799.60,798.16 802.67,795.90 808.96,795.31 C815.14,794.73 818.31,795.19 824.54,795.19 C830.78,795.19 833.90,795.28 840.13,795.31 C846.37,795.33 849.48,795.31 855.72,795.31 C861.95,795.31 865.07,795.31 871.30,795.31 C877.54,795.31 880.66,795.35 886.89,795.31 C893.13,795.26 896.26,794.79 902.48,795.07 C908.73,795.35 911.81,796.31 918.07,796.71 C924.28,797.11 927.42,796.97 933.65,797.06 C939.89,797.15 943.00,797.15 949.24,797.18 C955.47,797.20 958.59,797.15 964.83,797.18 C971.06,797.20 974.18,797.27 980.41,797.29 C986.65,797.32 989.77,797.29 996.00,797.29 L996.0,840.0 L637.5,840.0 Z" fill="rgba(153,102,255,0.1)"/><path d="M637.50,793.08 C643.73,793.04 646.85,792.99 653.09,792.97 C659.32,792.94 662.44,792.99 668.67,792.97 C674.91,792.94 678.03,792.85 684.26,792.85 C690.50,792.85 693.65,792.43 699.85,792.97 C706.12,793.51 709.16,795.02 715.43,795.54 C721.63,796.05 724.79,795.59 731.02,795.54 C737.26,795.49 740.37,795.38 746.61,795.31 C752.84,795.24 755.96,795.24 762.20,795.19 C768.43,795.14 771.61,794.49 777.78,795.07 C784.08,795.66 787.13,798.07 793.37,798.11 C799.60,798.16 802.67,795.90 808.96,795.31 C815.14,794.73 818.31,795.19 824.54,795.19 C830.78,795.19 833.90,795.28 840.13,795.31 C846.37,795.33 849.48,795.31 855.72,795.31 C861.95,795.31 865.07,795.31 871.30,795.31 C877.54,795.31 880.66,795.35 886.89,795.31 C893.13,795.26 896.26,794.79 902.48,795.07 C908.73,795.35 911.81,796.31 918.07,796.71 C924.28,797.11 927.42,796.97 933.65,797.06 C939.89,797.15 943.00,797.15 949.24,797.18 C955.47,797.20 958.59,797.15 964.83,797.18 C971.06,797.20 974.18,797.27 980.41,797.29 C986.65,797.32 989.77,797.29 996.00,797.29" fill="none" stroke="#9966ff" stroke-width="3"/></svg>
<div class="a" style="left:305px;top:919px;width:1551px;height:200px;background:#0c0a09"></div>
<div class="t" style="left:305px;width:1551px;text-align:center;top:929.10px;font-size:14px;line-height:14px;font-weight:700;color:#777">Disk Usage History</div>
<div class="t" style="right:1559px;top:949.10px;font-size:12px;line-height:12px;color:#777">100%</div>
<div class="t" style="right:1559px;top:978.35px;font-size:12px;line-height:12px;color:#777">75%</div>
<div class="t" style="right:1559px;top:1007.60px;font-size:12px;line-height:12px;color:#777">50%</div>
<div class="t" style="right:1559px;top:1036.85px;font-size:12px;line-height:12px;color:#777">25%</div>
<div class="t" style="right:1559px;top:1066.10px;font-size:12px;line-height:12px;color:#777">0%</div>
<div class="t" style="left:316px;top:1015px;font-size:12px;line-height:12px;color:#777;transform:translate(-50%,-50%) rotate(-90deg);transform-origin:center">Usage %</div>
<div class="t" style="left:266.60px;width:100px;text-align:right;top:1084px;font-size:12px;line-height:12px;color:#777;transform-origin:100% 0;transform:rotate(-50deg)">14:16</div>
<div class="t" style="left:297.80px;width:100px;text-align:right;top:1084px;font-size:12px;line-height:12px;color:#777;transform-origin:100% 0;transform:rotate(-50deg)">14:47</div>
<div class="t" style="left:329.00px;width:100px;text-align:right;top:1084px;font-size:12px;line-height:12px;color:#777;transform-origin:100% 0;transform:rotate(-50deg)">15:17</div>
<div class="t" style="left:360.20px;width:100px;text-align:right;top:1084px;font-size:12px;line-height:12px;color:#777;transform-origin:100% 0;transform:rotate(-50deg)">15:47</div>
<div class="t" style="left:391.40px;width:100px;text-align:right;top:1084px;font-size:12px;line-height:12px;color:#777;transform-origin:100% 0;transform:rotate(-50deg)">16:18</div>
<div class="t" style="left:422.60px;width:100px;text-align:right;top:1084px;font-size:12px;line-height:12px;color:#777;transform-origin:100% 0;transform:rotate(-50deg)">16:48</div>
<div class="t" style="left:453.80px;width:100px;text-align:right;top:1084px;font-size:12px;line-height:12px;color:#777;transform-origin:100% 0;transform:rotate(-50deg)">17:18</div>
<div class="t" style="left:485.00px;width:100px;text-align:right;top:1084px;font-size:12px;line-height:12px;color:#777;transform-origin:100% 0;transform:rotate(-50deg)">17:49</div>
<div class="t" style="left:516.20px;width:100px;text-align:right;top:1084px;font-size:12px;line-height:12px;color:#777;transform-origin:100% 0;transform:rotate(-50deg)">18:19</div>
<div class="t" style="left:547.40px;width:100px;text-align:right;top:1084px;font-size:12px;line-height:12px;color:#777;transform-origin:100% 0;transform:rotate(-50deg)">18:49</div>
<div class="t" style="left:578.60px;width:100px;text-align:right;top:1084px;font-size:12px;line-height:12px;color:#777;transform-origin:100% 0;transform:rotate(-50deg)">19:20</div>
<div class="t" style="left:609.80px;width:100px;text-align:right;top:1084px;font-size:12px;line-height:12px;color:#777;transform-origin:100% 0;transform:rotate(-50deg)">19:50</div>
<div class="t" style="left:641.00px;width:100px;text-align:right;top:1084px;font-size:12px;line-height:12px;color:#777;transform-origin:100% 0;transform:rotate(-50deg)">20:20</div>
<div class="t" style="left:672.20px;width:100px;text-align:right;top:1084px;font-size:12px;line-height:12px;color:#777;transform-origin:100% 0;transform:rotate(-50deg)">20:51</div>
<div class="t" style="left:703.40px;width:100px;text-align:right;top:1084px;font-size:12px;line-height:12px;color:#777;transform-origin:100% 0;transform:rotate(-50deg)">21:21</div>
<div class="t" style="left:734.60px;width:100px;text-align:right;top:1084px;font-size:12px;line-height:12px;color:#777;transform-origin:100% 0;transform:rotate(-50deg)">21:51</div>
<div class="t" style="left:765.80px;width:100px;text-align:right;top:1084px;font-size:12px;line-height:12px;color:#777;transform-origin:100% 0;transform:rotate(-50deg)">22:22</div>
<div class="t" style="left:797.00px;width:100px;text-align:right;top:1084px;font-size:12px;line-height:12px;color:#777;transform-origin:100% 0;transform:rotate(-50deg)">22:52</div>
<div class="t" style="left:828.20px;width:100px;text-align:right;top:1084px;font-size:12px;line-height:12px;color:#777;transform-origin:100% 0;transform:rotate(-50deg)">23:22</div>
<div class="t" style="left:859.40px;width:100px;text-align:right;top:1084px;font-size:12px;line-height:12px;color:#777;transform-origin:100% 0;transform:rotate(-50deg)">23:52</div>
<div class="t" style="left:890.60px;width:100px;text-align:right;top:1084px;font-size:12px;line-height:12px;color:#777;transform-origin:100% 0;transform:rotate(-50deg)">00:23</div>
<div class="t" style="left:921.80px;width:100px;text-align:right;top:1084px;font-size:12px;line-height:12px;color:#777;transform-origin:100% 0;transform:rotate(-50deg)">00:53</div>
<div class="t" style="left:953.00px;width:100px;text-align:right;top:1084px;font-size:12px;line-height:12px;color:#777;transform-origin:100% 0;transform:rotate(-50deg)">01:23</div>
<div class="t" style="left:984.20px;width:100px;text-align:right;top:1084px;font-size:12px;line-height:12px;color:#777;transform-origin:100% 0;transform:rotate(-50deg)">01:54</div>
<div class="t" style="left:1015.40px;width:100px;text-align:right;top:1084px;font-size:12px;line-height:12px;color:#777;transform-origin:100% 0;transform:rotate(-50deg)">02:24</div>
<div class="t" style="left:1046.60px;width:100px;text-align:right;top:1084px;font-size:12px;line-height:12px;color:#777;transform-origin:100% 0;transform:rotate(-50deg)">02:54</div>
<div class="t" style="left:1077.80px;width:100px;text-align:right;top:1084px;font-size:12px;line-height:12px;color:#777;transform-origin:100% 0;transform:rotate(-50deg)">03:25</div>
<div class="t" style="left:1109.00px;width:100px;text-align:right;top:1084px;font-size:12px;line-height:12px;color:#777;transform-origin:100% 0;transform:rotate(-50deg)">03:55</div>
<div class="t" style="left:1140.20px;width:100px;text-align:right;top:1084px;font-size:12px;line-height:12px;color:#777;transform-origin:100% 0;transform:rotate(-50deg)">04:25</div>
<div class="t" style="left:1171.40px;width:100px;text-align:right;top:1084px;font-size:12px;line-height:12px;color:#777;transform-origin:100% 0;transform:rotate(-50deg)">04:56</div>
<div class="t" style="left:1202.60px;width:100px;text-align:right;top:1084px;font-size:12px;line-height:12px;color:#777;transform-origin:100% 0;transform:rotate(-50deg)">05:26</div>
<div class="t" style="left:1233.80px;width:100px;text-align:right;top:1084px;font-size:12px;line-height:12px;color:#777;transform-origin:100% 0;transform:rotate(-50deg)">05:56</div>
<div class="t" style="left:1265.00px;width:100px;text-align:right;top:1084px;font-size:12px;line-height:12px;color:#777;transform-origin:100% 0;transform:rotate(-50deg)">06:27</div>
<div class="t" style="left:1296.20px;width:100px;text-align:right;top:1084px;font-size:12px;line-height:12px;color:#777;transform-origin:100% 0;transform:rotate(-50deg)">06:57</div>
<div class="t" style="left:1327.40px;width:100px;text-align:right;top:1084px;font-size:12px;line-height:12px;color:#777;transform-origin:100% 0;transform:rotate(-50deg)">07:27</div>
<div class="t" style="left:1358.60px;width:100px;text-align:right;top:1084px;font-size:12px;line-height:12px;color:#777;transform-origin:100% 0;transform:rotate(-50deg)">07:58</div>
<div class="t" style="left:1389.80px;width:100px;text-align:right;top:1084px;font-size:12px;line-height:12px;color:#777;transform-origin:100% 0;transform:rotate(-50deg)">08:28</div>
<div class="t" style="left:1421.00px;width:100px;text-align:right;top:1084px;font-size:12px;line-height:12px;color:#777;transform-origin:100% 0;transform:rotate(-50deg)">08:58</div>
<div class="t" style="left:1452.20px;width:100px;text-align:right;top:1084px;font-size:12px;line-height:12px;color:#777;transform-origin:100% 0;transform:rotate(-50deg)">09:28</div>
<div class="t" style="left:1483.40px;width:100px;text-align:right;top:1084px;font-size:12px;line-height:12px;color:#777;transform-origin:100% 0;transform:rotate(-50deg)">09:59</div>
<div class="t" style="left:1514.60px;width:100px;text-align:right;top:1084px;font-size:12px;line-height:12px;color:#777;transform-origin:100% 0;transform:rotate(-50deg)">10:29</div>
<div class="t" style="left:1545.80px;width:100px;text-align:right;top:1084px;font-size:12px;line-height:12px;color:#777;transform-origin:100% 0;transform:rotate(-50deg)">10:59</div>
<div class="t" style="left:1577.00px;width:100px;text-align:right;top:1084px;font-size:12px;line-height:12px;color:#777;transform-origin:100% 0;transform:rotate(-50deg)">11:30</div>
<div class="t" style="left:1608.20px;width:100px;text-align:right;top:1084px;font-size:12px;line-height:12px;color:#777;transform-origin:100% 0;transform:rotate(-50deg)">12:00</div>
<div class="t" style="left:1639.40px;width:100px;text-align:right;top:1084px;font-size:12px;line-height:12px;color:#777;transform-origin:100% 0;transform:rotate(-50deg)">12:30</div>
<div class="t" style="left:1670.60px;width:100px;text-align:right;top:1084px;font-size:12px;line-height:12px;color:#777;transform-origin:100% 0;transform:rotate(-50deg)">13:01</div>
<div class="t" style="left:1701.80px;width:100px;text-align:right;top:1084px;font-size:12px;line-height:12px;color:#777;transform-origin:100% 0;transform:rotate(-50deg)">13:31</div>
<div class="t" style="left:1733.00px;width:100px;text-align:right;top:1084px;font-size:12px;line-height:12px;color:#777;transform-origin:100% 0;transform:rotate(-50deg)">14:01</div>
<svg style="left:0;top:0" width="1920" height="1080"><path d="M372.00,1063.58 C378.22,1063.58 381.33,1063.58 387.54,1063.58 C393.76,1063.58 396.87,1063.58 403.09,1063.58 C409.30,1063.58 412.41,1063.58 418.63,1063.58 C424.85,1063.58 427.95,1063.58 434.17,1063.58 C440.39,1063.58 443.50,1063.62 449.71,1063.58 C455.93,1063.53 459.05,1063.60 465.26,1063.34 C471.48,1063.08 474.58,1062.57 480.80,1062.29 C487.01,1062.01 490.13,1062.03 496.34,1061.94 C502.56,1061.84 505.67,1061.84 511.89,1061.82 C518.10,1061.80 521.21,1061.82 527.43,1061.82 C533.65,1061.82 536.75,1061.82 542.97,1061.82 C549.19,1061.82 552.30,1061.82 558.51,1061.82 C564.73,1061.82 567.84,1061.82 574.06,1061.82 C580.27,1061.82 583.38,1061.82 589.60,1061.82 L589.6,1072.0 L372.0,1072.0 Z" fill="rgba(255,159,64,0.1)"/><path d="M372.00,1063.58 C378.22,1063.58 381.33,1063.58 387.54,1063.58 C393.76,1063.58 396.87,1063.58 403.09,1063.58 C409.30,1063.58 412.41,1063.58 418.63,1063.58 C424.85,1063.58 427.95,1063.58 434.17,1063.58 C440.39,1063.58 443.50,1063.62 449.71,1063.58 C455.93,1063.53 459.05,1063.60 465.26,1063.34 C471.48,1063.08 474.58,1062.57 480.80,1062.29 C487.01,1062.01 490.13,1062.03 496.34,1061.94 C502.56,1061.84 505.67,1061.84 511.89,1061.82 C518.10,1061.80 521.21,1061.82 527.43,1061.82 C533.65,1061.82 536.75,1061.82 542.97,1061.82 C549.19,1061.82 552.30,1061.82 558.51,1061.82 C564.73,1061.82 567.84,1061.82 574.06,1061.82 C580.27,1061.82 583.38,1061.82 589.60,1061.82" fill="none" stroke="#ff9f40" stroke-width="3"/><path d="M637.50,1061.82 C643.73,1061.82 646.85,1061.82 653.09,1061.82 C659.32,1061.82 662.44,1061.82 668.67,1061.82 C674.91,1061.82 678.03,1061.82 684.26,1061.82 C690.50,1061.82 693.61,1061.82 699.85,1061.82 C706.08,1061.82 709.20,1061.82 715.43,1061.82 C721.67,1061.82 724.79,1061.82 731.02,1061.82 C737.26,1061.82 740.37,1061.82 746.61,1061.82 C752.84,1061.82 755.96,1061.82 762.20,1061.82 C768.43,1061.82 771.55,1061.82 777.78,1061.82 C784.02,1061.82 787.13,1061.82 793.37,1061.82 C799.60,1061.82 802.72,1061.82 808.96,1061.82 C815.19,1061.82 818.31,1061.82 824.54,1061.82 C830.78,1061.82 833.90,1061.82 840.13,1061.82 C846.37,1061.82 849.48,1061.82 855.72,1061.82 C861.95,1061.82 865.07,1061.82 871.30,1061.82 C877.54,1061.82 880.66,1061.82 886.89,1061.82 C893.13,1061.82 896.24,1061.91 902.48,1061.82 C908.71,1061.73 911.83,1061.45 918.07,1061.35 C924.30,1061.26 927.42,1061.35 933.65,1061.35 C939.89,1061.35 943.00,1061.35 949.24,1061.35 C955.47,1061.35 958.59,1061.35 964.83,1061.35 C971.06,1061.35 974.18,1061.35 980.41,1061.35 C986.65,1061.35 989.77,1061.35 996.00,1061.35 L996.0,1072.0 L637.5,1072.0 Z" fill="rgba(255,159,64,0.1)"/><path d="M637.50,1061.82 C643.73,1061.82 646.85,1061.82 653.09,1061.82 C659.32,1061.82 662.44,1061.82 668.67,1061.82 C674.91,1061.82 678.03,1061.82 684.26,1061.82 C690.50,1061.82 693.61,1061.82 699.85,1061.82 C706.08,1061.82 709.20,1061.82 715.43,1061.82 C721.67,1061.82 724.79,1061.82 731.02,1061.82 C737.26,1061.82 740.37,1061.82 746.61,1061.82 C752.84,1061.82 755.96,1061.82 762.20,1061.82 C768.43,1061.82 771.55,1061.82 777.78,1061.82 C784.02,1061.82 787.13,1061.82 793.37,1061.82 C799.60,1061.82 802.72,1061.82 808.96,1061.82 C815.19,1061.82 818.31,1061.82 824.54,1061.82 C830.78,1061.82 833.90,1061.82 840.13,1061.82 C846.37,1061.82 849.48,1061.82 855.72,1061.82 C861.95,1061.82 865.07,1061.82 871.30,1061.82 C877.54,1061.82 880.66,1061.82 886.89,1061.82 C893.13,1061.82 896.24,1061.91 902.48,1061.82 C908.71,1061.73 911.83,1061.45 918.07,1061.35 C924.30,1061.26 927.42,1061.35 933.65,1061.35 C939.89,1061.35 943.00,1061.35 949.24,1061.35 C955.47,1061.35 958.59,1061.35 964.83,1061.35 C971.06,1061.35 974.18,1061.35 980.41,1061.35 C986.65,1061.35 989.77,1061.35 996.00,1061.35" fill="none" stroke="#ff9f40" stroke-width="3"/></svg>
<div class="a" style="left:1905px;top:0;width:15px;height:1080px;background:#2c2c2c"></div>
<div class="a" style="left:1908px;top:18px;width:9px;height:718px;border-radius:5px;background:#a3a3a3"></div>
<svg style="left:1905px;top:0" width="15" height="1080"><path d="M7.5 5 L11.5 11.5 L3.5 11.5 Z" fill="#a3a3a3" stroke="#a3a3a3" stroke-linejoin="round" stroke-width="1"/><path d="M7.5 1075 L11.5 1068.5 L3.5 1068.5 Z" fill="#a3a3a3" stroke="#a3a3a3" stroke-linejoin="round" stroke-width="1"/></svg>
</body></html>
